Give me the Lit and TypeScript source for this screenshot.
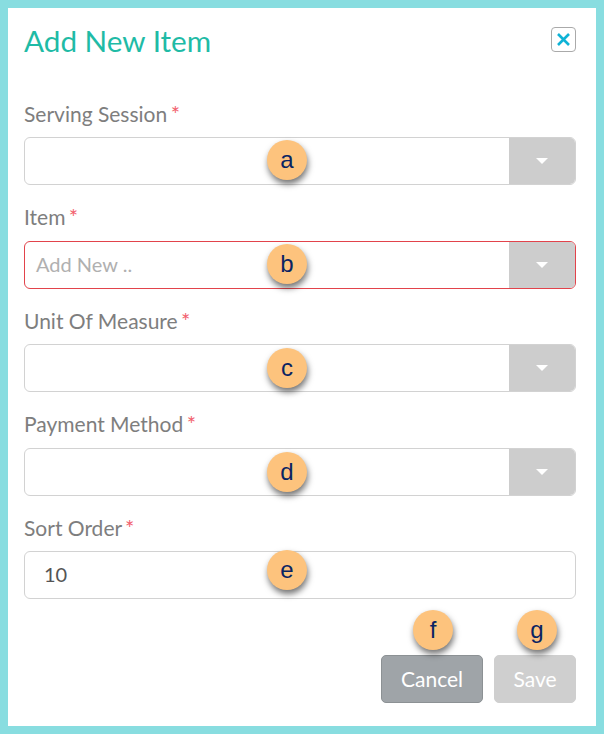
import { LitElement, html, css } from "lit";
import { customElement } from "lit/decorators.js";

const fields = [
  { label: "Serving Session", badge: "a", select: true, top: 3 },
  { label: "Item", badge: "b", select: true, placeholder: "Add New ..", invalid: true, top: 3 },
  { label: "Unit Of Measure", badge: "c", select: true, top: 4 },
  { label: "Payment Method", badge: "d", select: true, top: 4 },
  { label: "Sort Order", badge: "e", value: "10", top: -1 },
];

@customElement("app-root")
export class AppRoot extends LitElement {
  static styles = css`
    :host { display: block; width: 604px; height: 734px; box-sizing: border-box; border: 8px solid #88dde0; background: #fff; font-family: Lato, sans-serif; position: relative; overflow: hidden; }
    .dialog { padding: 0 20px 0 16px; display: flex; flex-direction: column; }
    .head { display: flex; justify-content: space-between; align-items: flex-start; height: 83px; }
    h1 { margin: 14px 0 0; font-size: 29.7px; line-height: 38px; font-weight: 400; color: #1fbba6; }
    .close { margin-top: 19px; width: 25px; height: 25px; box-sizing: border-box; border: 1px solid #aaa; border-radius: 4px; background: #fff; padding: 0; display: flex; align-items: center; justify-content: center; }
    .field { height: 103.5px; display: flex; flex-direction: column; }
    label { height: 46px; box-sizing: border-box; padding-top: 9.6px; font-size: 21px; line-height: 26px; color: #7e7e7e; display: block; }
    label span { color: #f2606e; font-size: 22px; margin-left: -2px; }
    .control { position: relative; height: 48px; box-sizing: border-box; border: 1px solid #d2d2d2; border-radius: 6px; display: flex; background: #fff; }
    .control.invalid { border-color: #e2434b; }
    .text { flex: 1; padding-left: 11px; font-size: 20px; line-height: 45px; color: #b0b0b0; }
    .text.value { padding-left: 19px; color: #555; }
    .arrow { width: 66px; background: #cdcdcd; border-radius: 0 5px 5px 0; display: flex; align-items: center; justify-content: center; }
    .arrow i { width: 0; height: 0; border-left: 6px solid transparent; border-right: 6px solid transparent; border-top: 6px solid #fff; }
    .badge { position: absolute; width: 40px; height: 40px; border-radius: 50%; background: #fdc37d; color: #0a2463; font: 24px/40px "Liberation Sans", Arial, sans-serif; text-align: center; box-shadow: 1px 4px 6px rgba(0, 0, 0, 0.55); }
    .control .badge { left: 242px; }
    .actions { display: flex; justify-content: flex-end; gap: 11px; margin-top: 46px; position: relative; }
    button.act { height: 48px; box-sizing: border-box; border-radius: 5px; color: #fff; font: 21px Lato, sans-serif; padding: 0; }
    .cancel { width: 102px; background: #9fa4a8; border: 1px solid #8c9194; }
    .save { width: 82px; background: #cfcfcf; border: 1px solid #cfcfcf; }
    .actions .badge.f { right: 123px; top: -45px; }
    .actions .badge.g { right: 19px; top: -45px; }
  `;

  render() {
    return html`<div class="dialog">
      <div class="head">
        <h1>Add New Item</h1>
        <button class="close" aria-label="Close">
          <svg width="15" height="15" viewBox="0 0 15 15"><path d="M2 2 13 13M13 2 2 13" stroke="#0fb3d6" stroke-width="2.6" fill="none"/></svg>
        </button>
      </div>
      ${fields.map(
        (f) => html`<div class="field">
          <label>${f.label} <span>*</span></label>
          <div class="control ${f.invalid ? "invalid" : ""}">
            <div class="text ${f.value ? "value" : ""}">${f.value ?? f.placeholder ?? ""}</div>
            ${f.select ? html`<div class="arrow"><i></i></div>` : ""}
            <div class="badge" style="top:${f.top - 1}px">${f.badge}</div>
          </div>
        </div>`
      )}
      <div class="actions">
        <button class="act cancel">Cancel</button>
        <button class="act save">Save</button>
        <div class="badge f">f</div>
        <div class="badge g">g</div>
      </div>
    </div>`;
  }
}
